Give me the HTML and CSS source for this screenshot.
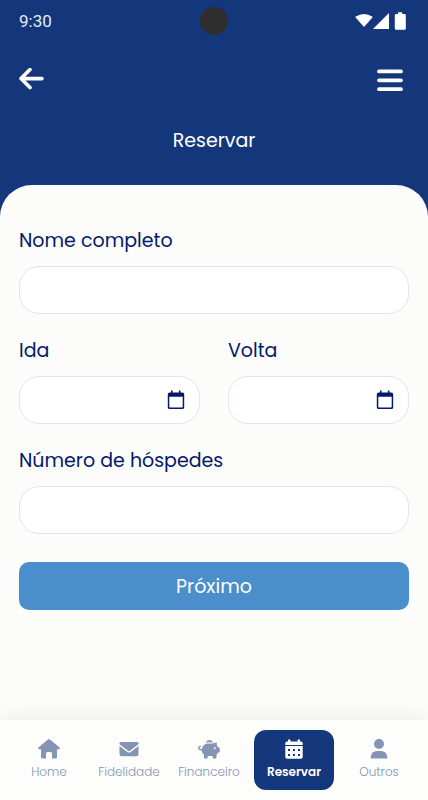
FILE: index.html
```html
<!DOCTYPE html>
<html lang="pt-BR">
<head>
    <meta charset="UTF-8">
    <meta name="viewport" content="width=device-width, initial-scale=1.0">
    <title>Reservar</title>
    <link rel="stylesheet" href="styles.css">
</head>
<body>
    <header class="header">
        <!-- Status bar -->
        <div class="status-bar">
            <span class="time">9:30</span>
            <span class="camera"></span>
            <svg class="status-icons" viewBox="0 0 51 18" aria-hidden="true">
                <path d="M9 15 L.6 5.6 Q.2 5 .8 4.6 Q9 -.4 17.2 4.6 Q17.8 5 17.4 5.6 Z"/>
                <path d="M18 17 L34 1 V17 Z"/>
                <path d="M43 1 Q43 .3 43.6 .3 H46.6 Q47.2 .3 47.2 1 V2 H49.6 Q50.8 2 50.8 3.2 V16.6 Q50.8 17.8 49.6 17.8 H41 Q39.8 17.8 39.8 16.6 V3.2 Q39.8 2 41 2 H43 Z"/>
            </svg>
        </div>

        <div class="top-bar">
            <button class="icon-button" type="button" aria-label="Voltar">
                <svg width="26" height="24" viewBox="0 0 26 24"><path d="M11 1.6 L2 10.6 L11 19.6 M2 10.6 H23" fill="none" stroke="currentColor" stroke-width="3.6" stroke-linecap="round" stroke-linejoin="round"/></svg>
            </button>
            <button class="icon-button" type="button" aria-label="Menu">
                <svg width="26" height="24" viewBox="0 0 26 24"><path d="M2 3.4 H24 M2 12.3 H24 M2 21.2 H24" fill="none" stroke="currentColor" stroke-width="3.8" stroke-linecap="round"/></svg>
            </button>
        </div>

        <h1 class="title">Reservar</h1>
    </header>

    <main class="sheet">
        <form class="form">
            <div class="field">
                <label for="nome">Nome completo</label>
                <input class="control" type="text" id="nome">
            </div>

            <div class="field-row">
                <div class="field">
                    <label for="ida">Ida</label>
                    <div class="control date-control">
                        <input type="text" id="ida">
                        <button type="button" aria-label="Escolher data de ida">
                            <svg width="18" height="20" viewBox="0 0 18 20"><path d="M4 .4 H5.6 V2.4 H11.9 V.4 H13.5 V2.4 H15.3 Q17.2 2.4 17.2 4.3 V17.2 Q17.2 19.1 15.3 19.1 H2.7 Q.8 19.1 .8 17.2 V4.3 Q.8 2.4 2.7 2.4 H4 Z M2.3 6.8 V16.8 Q2.3 17.6 3.1 17.6 H14.9 Q15.7 17.6 15.7 16.8 V6.8 Z" fill="currentColor" fill-rule="evenodd"/></svg>
                        </button>
                    </div>
                </div>
                <div class="field">
                    <label for="volta">Volta</label>
                    <div class="control date-control">
                        <input type="text" id="volta">
                        <button type="button" aria-label="Escolher data de volta">
                            <svg width="18" height="20" viewBox="0 0 18 20"><path d="M4 .4 H5.6 V2.4 H11.9 V.4 H13.5 V2.4 H15.3 Q17.2 2.4 17.2 4.3 V17.2 Q17.2 19.1 15.3 19.1 H2.7 Q.8 19.1 .8 17.2 V4.3 Q.8 2.4 2.7 2.4 H4 Z M2.3 6.8 V16.8 Q2.3 17.6 3.1 17.6 H14.9 Q15.7 17.6 15.7 16.8 V6.8 Z" fill="currentColor" fill-rule="evenodd"/></svg>
                        </button>
                    </div>
                </div>
            </div>

            <div class="field">
                <label for="hospedes">Número de hóspedes</label>
                <input class="control" type="text" inputmode="numeric" id="hospedes">
            </div>

            <button class="submit" type="submit">Próximo</button>
        </form>
    </main>

    <!-- Bottom navigation -->
    <nav class="bottom-nav">
        <a class="nav-item" href="#home">
            <svg viewBox="0 0 22 20"><path d="M11 0 Q11.6 0 12 .4 L21.6 8.6 Q22.3 10 21 10.2 H19 V18 Q19 19.5 17.5 19.5 H14 V14.5 Q14 13 12.5 13 H9.5 Q8 13 8 14.5 V19.5 H4.5 Q3 19.5 3 18 V10.2 H1 Q-.3 10 .4 8.6 L10 .4 Q10.4 0 11 0 Z"/></svg>
            <span>Home</span>
        </a>
        <a class="nav-item" href="#fidelidade">
            <svg viewBox="0 0 22 20"><path d="M3 3 H19 Q20.5 3 20.5 4.3 Q20.5 5.2 19.5 6 L12 11.7 Q11 12.3 10 11.7 L2.5 6 Q1.5 5.2 1.5 4.3 Q1.5 3 3 3 Z"/><path d="M1.5 7 L9.3 12.9 Q11 14 12.7 12.9 L20.5 7 V15 Q20.5 17.3 18.2 17.3 H3.8 Q1.5 17.3 1.5 15 Z"/></svg>
            <span>Fidelidade</span>
        </a>
        <a class="nav-item" href="#financeiro">
            <svg viewBox="0 0 22 20"><path d="M7.6 3.6 A4 3.8 0 0 1 15.2 3.6 Q11 2.8 7.6 3.6 Z"/><path d="M9 4.6 H14.5 L18 3.4 Q18.8 3.2 18.8 4 V6.5 Q19.8 7.4 20.2 8.5 H21.1 Q21.8 8.5 21.8 9.3 V12.7 Q21.8 13.5 21.1 13.5 H20 Q19.3 15 18.5 15.8 V18.5 Q18.5 19.5 17.5 19.5 H15.7 Q14.7 19.5 14.7 18.5 V17 H9.7 V18.5 Q9.7 19.5 8.7 19.5 H7 Q6 19.5 6 18.5 V15.8 Q3.8 14 3.8 11.4 H2.7 Q0 11.2 0 9 Q0 6.8 2.5 6.6 Q3.5 7.2 2.5 8 Q1.4 8.2 1.4 9 Q1.4 9.9 2.8 9.9 H4 Q4.8 5.4 9 4.6 Z M16.8 8.2 A1 1 0 1 0 16.8 10.2 A1 1 0 1 0 16.8 8.2 Z" fill-rule="evenodd"/></svg>
            <span>Financeiro</span>
        </a>
        <a class="nav-item active" href="#reservar" aria-current="page">
            <svg viewBox="0 0 22 20"><path d="M5 1 Q6.2 -.5 7.4 1 V2.5 H14.6 V1 Q15.8 -.5 17 1 V2.5 H18 Q19.7 2.5 19.7 4.2 V6 H2.3 V4.2 Q2.3 2.5 4 2.5 H5 Z"/><path d="M2.3 7 H19.7 V18 Q19.7 19.7 18 19.7 H4 Q2.3 19.7 2.3 18 Z M5 10 V12 H7 V10 Z M10 10 V12 H12 V10 Z M15 10 V12 H17 V10 Z M5 15 V17 H7 V15 Z M10 15 V17 H12 V15 Z M15 15 V17 H17 V15 Z" fill-rule="evenodd"/></svg>
            <span>Reservar</span>
        </a>
        <a class="nav-item" href="#outros">
            <svg viewBox="0 0 22 20"><circle cx="11" cy="5" r="5"/><path d="M2.7 19.5 V18 Q3.5 12 9 12 H13 Q18.5 12 19.3 18 V19.5 Z"/></svg>
            <span>Outros</span>
        </a>
    </nav>
</body>
</html>
```

FILE: styles.css
```css
* {
    margin: 0;
    padding: 0;
    box-sizing: border-box;
}

body {
    font-family: Poppins, Inter, sans-serif;
    background: #14377c;
    color: #03196a;
    min-height: 100vh;
    display: flex;
    flex-direction: column;
}

button,
input {
    font: inherit;
    color: inherit;
    border: none;
    background: none;
}

button {
    cursor: pointer;
}

svg {
    display: block;
}

/* Header */
.header {
    color: #ffffff;
}

.status-bar {
    display: grid;
    grid-template-columns: 1fr auto 1fr;
    align-items: center;
    height: 42px;
    padding: 0 19px;
}

.time {
    font-family: Roboto, sans-serif;
    font-size: 17px;
    color: #e6ebf5;
}

.camera {
    width: 28px;
    height: 28px;
    border-radius: 50%;
    background: #2e2e2e;
}

.status-icons {
    width: 51px;
    height: 18px;
    margin-right: 3px;
    justify-self: end;
    fill: #ffffff;
}

.top-bar {
    display: flex;
    justify-content: space-between;
    padding: 26px 25px 0 19px;
}

.icon-button {
    height: 24px;
}

.title {
    padding: 35px 19px 30px;
    font-size: 19px;
    font-weight: 400;
    line-height: 28px;
    text-align: center;
}

/* Form */
.sheet {
    flex: 1;
    padding: 42px 19px;
    background: #fcfcfa;
    border-radius: 32px 32px 0 0;
}

.form {
    display: flex;
    flex-direction: column;
    gap: 23px;
}

.field {
    display: flex;
    flex-direction: column;
    gap: 11px;
    min-width: 0;
}

.field label {
    font-size: 19px;
    line-height: 28px;
}

.field-row {
    display: grid;
    grid-template-columns: 1fr 1fr;
    gap: 28px;
}

.control {
    width: 100%;
    height: 48px;
    padding: 0 14px;
    background: #ffffff;
    border: 1px solid #e3e4f2;
    border-radius: 20px;
    font-size: 16px;
}

.date-control {
    display: flex;
    align-items: center;
}

.date-control input {
    flex: 1;
    min-width: 0;
    height: 100%;
    outline: none;
}

.submit {
    height: 48px;
    margin-top: 5px;
    background: #4a8ecb;
    border-radius: 10px;
    color: #ffffff;
    font-size: 19px;
}

/* Bottom navigation */
.bottom-nav {
    display: flex;
    padding: 10px 9px;
    background: #fdfdfc;
    box-shadow: 0 -4px 20px rgba(0, 0, 0, 0.06);
}

.nav-item {
    flex: 1;
    display: flex;
    flex-direction: column;
    align-items: center;
    gap: 4px;
    height: 60px;
    padding-top: 9px;
    color: #8594b4;
    font-size: 12px;
    font-weight: 300;
    line-height: 18px;
    text-decoration: none;
}

.nav-item svg {
    width: 22px;
    height: 20px;
    fill: currentColor;
}

.nav-item.active {
    margin: 0 5px;
    background: #14377c;
    border-radius: 12px;
    color: #ffffff;
    font-weight: 600;
}
```
